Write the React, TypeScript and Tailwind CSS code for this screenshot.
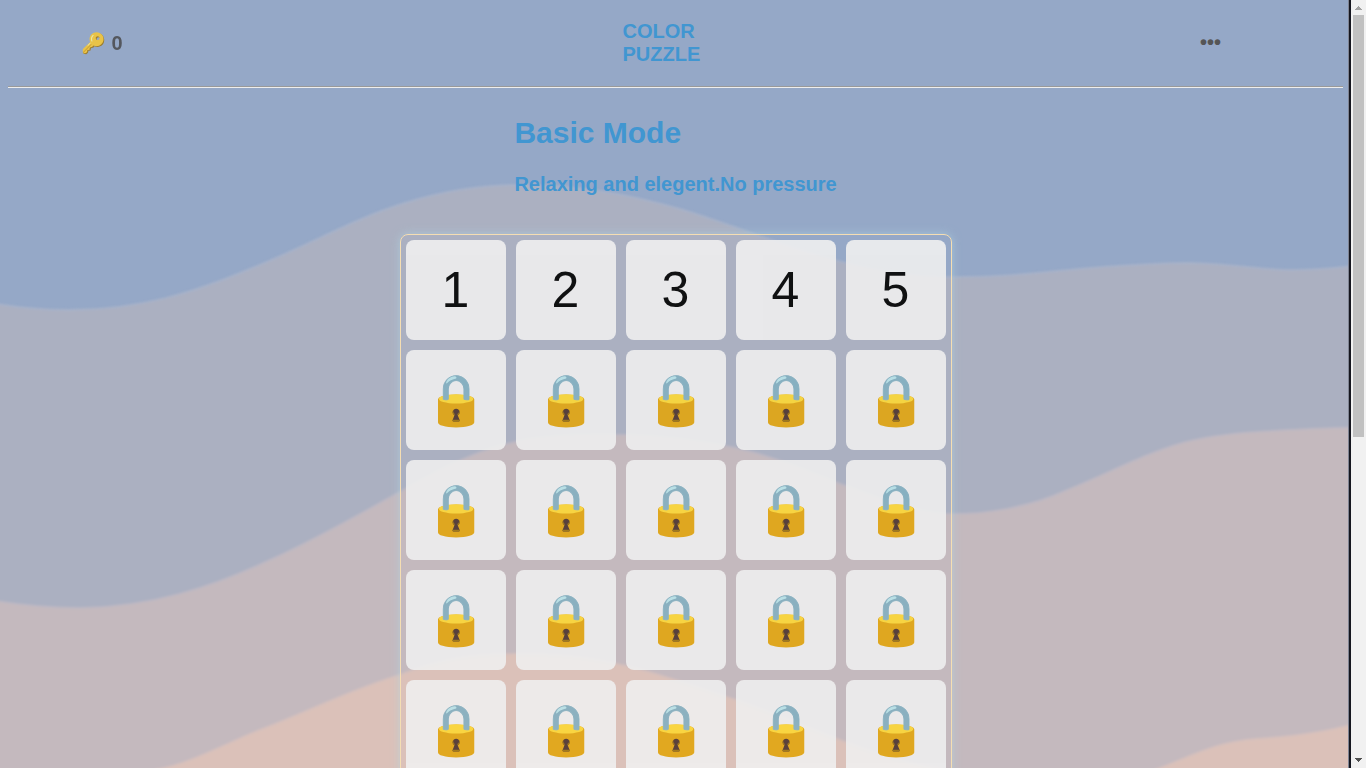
import React from "react";

const LEVELS = Array.from({ length: 25 }, (_, i) => i + 1);
const UNLOCKED = 5;

function Waves() {
  return (
    <svg className="absolute inset-0 h-full w-full" viewBox="0 0 1351 768" preserveAspectRatio="none" aria-hidden="true">
      <defs>
        <filter id="soft" x="-2%" y="-2%" width="104%" height="104%" colorInterpolationFilters="sRGB">
          <feGaussianBlur stdDeviation="1.2" />
        </filter>
      </defs>
      <rect width="1351" height="768" fill="#95a8c7" />
      <g filter="url(#soft)" strokeWidth="2">
        <path
          fill="#abb0c1"
          stroke="#a7b2c9"
          d="M-10 303C20 308 45 310 70 310C140 310 195 292 250 269C310 245 355 218 405 203C440 192 480 185 520 185C580 185 630 195 680 209C740 227 785 248 850 264C880 271 910 276 945 277C1000 278 1045 272 1090 268C1130 265 1160 263 1190 263C1235 264 1260 270 1290 270C1315 270 1335 268 1361 265V800H-10Z"
        />
        <path
          fill="#c4b9be"
          stroke="#bdb8c3"
          d="M-10 600C25 606 55 608 80 608C150 607 210 588 270 560C315 540 358 515 400 492C445 466 485 446 530 439C560 435 590 434 625 435C665 436 700 441 736 448C780 458 810 473 846 486C880 499 915 513 946 514C985 515 1030 507 1065 491C1110 473 1145 453 1186 442C1230 431 1290 430 1361 427V800H-10Z"
        />
        <path
          fill="#dbc1b9"
          stroke="#d5c0bd"
          d="M155 770C190 764 225 744 260 730C310 711 350 690 400 675C440 659 475 654 515 654C560 654 590 658 626 666C665 675 700 689 736 700C775 714 810 729 850 744C885 757 930 770 970 775V800H155ZM1155 770C1190 757 1215 742 1256 739C1290 737 1325 733 1361 722V800H1155Z"
        />
      </g>
    </svg>
  );
}

function Scrollbar() {
  return (
    <div className="flex w-[15px] shrink-0 flex-col items-center bg-[#f1f1f1]">
      <div className="flex h-[15px] items-center justify-center">
        <svg width="7" height="4" viewBox="0 0 7 4" shapeRendering="crispEdges">
          <path d="M3 0h1v1h1v1h1v1h1v1H0V3h1V2h1V1h1z" fill="#a3a3a3" />
        </svg>
      </div>
      <div className="h-[422px] w-[11px] bg-[#c1c1c1]" />
      <div className="grow" />
      <div className="flex h-[15px] items-start justify-center pt-[5px]">
        <svg width="7" height="4" viewBox="0 0 7 4" shapeRendering="crispEdges">
          <path d="M0 0h7v1H6v1H5v1H4v1H3V3H2V2H1V1H0z" fill="#505050" />
        </svg>
      </div>
    </div>
  );
}

function Header() {
  return (
    <header className="flex h-[86px] items-center justify-between text-[20px] leading-[23px] font-bold">
      <div className="w-[138px] pl-[81px] whitespace-nowrap text-[#444444] opacity-80">🔑 0</div>
      <div className="mr-[15px] w-[78px] text-[#4196d1]">
        COLOR
        <br />
        PUZZLE
      </div>
      <div className="pr-[130px] pb-[2px] text-[#555555]">•••</div>
    </header>
  );
}

export default function App() {
  return (
    <div className="flex h-screen overflow-hidden font-['Liberation_Sans',Arial,sans-serif]">
      <div className="relative min-w-0 grow overflow-hidden">
        <Waves />
        <div className="relative">
          <Header />
          <div className="mx-2 h-[2px] border-t border-b border-t-[#9a9a9a] border-b-[#eeeeee]" />
          <div className="ml-[514.4px] h-[146px] pt-[27px] font-bold text-[#4196d1]">
            <h1 className="text-[30px] leading-[35px]">Basic Mode</h1>
            <h2 className="mt-[23px] text-[20px] leading-[23px]">Relaxing and elegent.No pressure</h2>
          </div>
          <div className="ml-[400px] grid w-[552px] grid-cols-5 gap-[10px] rounded-lg border border-[#f5deb3] p-[5px] shadow-[0_0_10px_rgba(173,216,230,0.6)]">
            {LEVELS.map((n) => (
              <button key={n} className="flex h-[100px] w-[100px] items-center justify-center rounded-lg bg-[#efefef] pr-[1px] text-[50px] leading-[57px] text-black opacity-90">
                {n <= UNLOCKED ? n : "🔒"}
              </button>
            ))}
          </div>
        </div>
        <div className="absolute inset-y-0 right-0 w-[3px] border-r-2 border-l border-l-[#7f8493] border-r-[#15161f]" />
      </div>
      <Scrollbar />
    </div>
  );
}
